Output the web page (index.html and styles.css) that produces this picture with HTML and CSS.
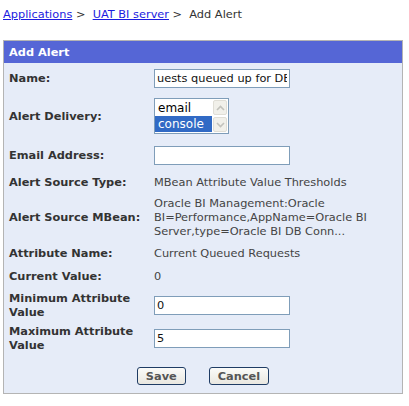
FILE: index.html
```html
<!DOCTYPE html>
<html>
<head>
<meta charset="utf-8">
<link rel="stylesheet" href="styles.css">
</head>
<body>
<div class="crumbs"><a href="#">Applications</a> &gt;&nbsp; <a href="#">UAT BI server</a> &gt;&nbsp; Add Alert</div>
<div class="panel">
  <div class="panel-head">Add Alert</div>
  <div class="form">
    <div class="lbl">Name:</div>
    <div class="val"><input class="txt" type="text" value="uests queued up for DB"></div>

    <div class="lbl">Alert Delivery:</div>
    <div class="val">
      <div class="listbox">
        <div class="items">
          <div class="item">email</div>
          <div class="item sel">console</div>
        </div>
        <div class="sbar">
          <div class="sbtn"><svg width="9" height="6" viewBox="0 0 9 6"><path d="M1 5 L4.5 1.5 L8 5" fill="none" stroke="#c2c2bc" stroke-width="1.6"/></svg></div>
          <div class="sbtn"><svg width="9" height="6" viewBox="0 0 9 6"><path d="M1 1 L4.5 4.5 L8 1" fill="none" stroke="#c2c2bc" stroke-width="1.6"/></svg></div>
        </div>
      </div>
    </div>

    <div class="lbl">Email Address:</div>
    <div class="val"><input class="txt" type="text" value=""></div>

    <div class="lbl">Alert Source Type:</div>
    <div class="val">MBean Attribute Value Thresholds</div>

    <div class="lbl">Alert Source MBean:</div>
    <div class="val">Oracle BI Management:Oracle<br>BI=Performance,AppName=Oracle BI<br>Server,type=Oracle BI DB Conn...</div>

    <div class="lbl">Attribute Name:</div>
    <div class="val">Current Queued Requests</div>

    <div class="lbl">Current Value:</div>
    <div class="val">0</div>

    <div class="lbl">Minimum Attribute Value</div>
    <div class="val"><input class="txt" type="text" value="0"></div>

    <div class="lbl">Maximum Attribute Value</div>
    <div class="val"><input class="txt" type="text" value="5"></div>
  </div>
  <div class="actions">
    <button class="btn">Save</button>
    <button class="btn">Cancel</button>
  </div>
</div>
</body>
</html>
```

FILE: styles.css
```css
html, body {
  margin: 0;
  padding: 0;
  background: #ffffff;
}
body {
  font-family: "DejaVu Sans", Verdana, sans-serif;
  font-size: 11.35px;
  color: #333333;
  padding: 0 6px 0 3px;
}
.crumbs {
  padding-top: 7px;
  line-height: 14px;
  height: 14px;
  color: #333333;
}
.crumbs a {
  color: #1c1ce0;
  text-decoration: underline;
}
.panel {
  margin-top: 19px;
  border: 1px solid #b4b4b4;
  background: #e6ecf8;
  width: 398px;
}
.panel-head {
  background: #5566d6;
  color: #ffffff;
  font-weight: bold;
  height: 22px;
  line-height: 22px;
  padding-left: 5px;
}
.form {
  display: grid;
  grid-template-columns: 145px 1fr;
  grid-template-rows: 30px 46px 32px 21px 49px 23px 23px 36px 30px;
  align-items: center;
  padding-left: 5px;
  line-height: 14px;
}
.lbl {
  font-weight: bold;
  color: #333333;
  padding-right: 10px;
}
.val {
  color: #444444;
}
.txt {
  box-sizing: border-box;
  width: 136px;
  height: 19px;
  margin: 0;
  border: 1px solid #7f9db9;
  background: #ffffff;
  padding: 0 2px;
  font-family: "DejaVu Sans", Verdana, sans-serif;
  font-size: 11.35px;
  color: #111111;
  outline: none;
}
.listbox {
  box-sizing: border-box;
  width: 75px;
  height: 36px;
  border: 1px solid #7f9db9;
  background: #ffffff;
  display: flex;
  padding: 1px 1px 1px 0;
}
.items {
  flex: 1;
  font-size: 12px;
  color: #000000;
}
.item {
  height: 16px;
  line-height: 16px;
  padding-left: 3px;
}
.item.sel {
  background: #316ac5;
  color: #ffffff;
}
.sbar {
  width: 14px;
  display: flex;
  flex-direction: column;
  gap: 2px;
  padding-left: 1px;
}
.sbtn {
  box-sizing: border-box;
  height: 15px;
  background: #f1f0ea;
  border: 1px solid #e0ded6;
  border-radius: 2px;
  display: flex;
  align-items: center;
  justify-content: center;
}
.actions {
  display: flex;
  justify-content: center;
  gap: 23px;
  padding: 14px 0 8px;
}
.btn {
  box-sizing: border-box;
  height: 18px;
  padding: 0 8px;
  border: 1px solid #1f3c64;
  border-radius: 3px;
  background: linear-gradient(#fbfbf9, #e9e7e0);
  font-family: "DejaVu Sans", Verdana, sans-serif;
  font-size: 11.35px;
  font-weight: bold;
  color: #555555;
  line-height: 14px;
}
```
